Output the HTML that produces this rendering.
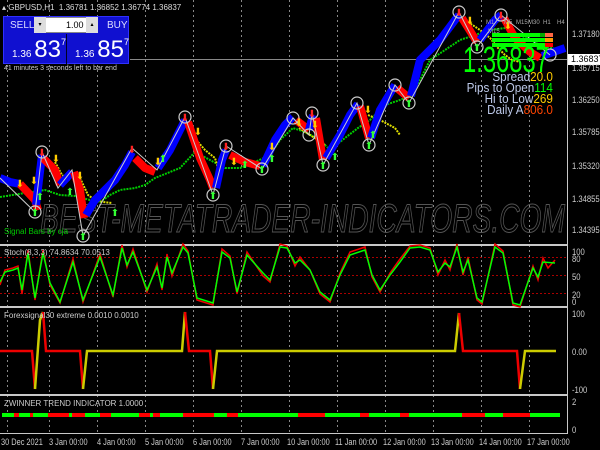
<!DOCTYPE html>
<html><head><meta charset="utf-8"><style>
*{margin:0;padding:0;box-sizing:border-box}
body{width:600px;height:450px;background:#000;overflow:hidden;position:relative;font-family:"Liberation Sans",sans-serif;color:#fff}
.t{position:absolute;white-space:nowrap}
.ax{position:absolute;left:572px;font-size:9px;color:#ccc;transform:scaleX(.85);transform-origin:left}
.d{position:absolute;top:437px;font-size:9px;color:#ccc;transform:scaleX(.82);transform-origin:left;white-space:nowrap}
</style></head><body>
<svg width="600" height="450" style="position:absolute;left:0;top:0">
<g stroke="#888" stroke-dasharray="2,3" stroke-width="1">
<line x1="7.5" y1="0" x2="7.5" y2="433"/><line x1="49.5" y1="0" x2="49.5" y2="433"/><line x1="97.5" y1="0" x2="97.5" y2="433"/><line x1="145.5" y1="0" x2="145.5" y2="433"/><line x1="193.5" y1="0" x2="193.5" y2="433"/><line x1="241.5" y1="0" x2="241.5" y2="433"/><line x1="289.5" y1="0" x2="289.5" y2="433"/><line x1="337.5" y1="0" x2="337.5" y2="433"/><line x1="385.5" y1="0" x2="385.5" y2="433"/><line x1="433.5" y1="0" x2="433.5" y2="433"/><line x1="481.5" y1="0" x2="481.5" y2="433"/><line x1="529.5" y1="0" x2="529.5" y2="433"/>
</g>
<g stroke="#c8c8c8" stroke-width="2" fill="none">
<line x1="0" y1="245" x2="568" y2="245"/><line x1="0" y1="307" x2="568" y2="307"/><line x1="0" y1="395" x2="568" y2="395"/>
</g>
<line x1="567.5" y1="0" x2="567.5" y2="433" stroke="#c8c8c8"/>
<line x1="0" y1="433.5" x2="568" y2="433.5" stroke="#c8c8c8"/>
<line x1="130" y1="59.5" x2="567" y2="59.5" stroke="#888"/>
<text x="40" y="232" font-family="Liberation Sans" font-style="italic" font-size="40" fill="none" stroke="#555" stroke-width="1" textLength="525" lengthAdjust="spacingAndGlyphs">BEST-METATRADER-INDICATORS.COM</text>
<polyline fill="none" stroke="#0c0" stroke-width="2" stroke-dasharray="2,1" points="0,197 25,193 45,190 60,195 75,196 90,200 100,202 110,195 120,190 135,188 145,185 155,178 165,174 180,168 195,152 210,160 225,168 240,168 255,162 270,155 280,140 293,128 305,132 320,140 330,150 345,138 358,128 370,120 385,105 400,100 412,95 420,80 430,60 445,50 460,40 475,35 490,30 505,28 520,35 540,45 560,50"/>
<g fill="none" stroke="#dd0" stroke-width="2" stroke-dasharray="2,1">
<polyline points="55,162 62,175 70,180"/>
<polyline points="80,178 88,195 95,200 103,202 112,203"/>
<polyline points="198,142 205,150 215,158 218,168"/>
<polyline points="299,128 310,135 318,140 325,145"/>
<polyline points="368,115 380,120 395,128 400,135"/>
<polyline points="468,22 480,30 490,38 498,48 505,55 512,60 520,62"/>
</g>
<g fill="none" stroke-width="8" stroke-linejoin="round">
<polyline stroke="#00f" points="0,178 10,182 20,184"/>
<polyline stroke="#f00" points="20,184 35,200 38,210"/>
<polyline stroke="#00f" points="36,205 42,155"/>
<polyline stroke="#f00" points="43,158 55,170 60,185"/>
<polyline stroke="#00f" points="60,185 72,172"/>
<polyline stroke="#f00" points="74,172 80,190 84,218"/>
<polyline stroke="#00f" points="86,215 95,200 105,190 115,180 125,165 132,152"/>
<polyline stroke="#f00" points="135,158 145,168 155,172"/>
<polyline stroke="#00f" points="158,168 170,150 180,130 185,120"/>
<polyline stroke="#f00" points="188,122 200,158 210,180 213,188"/>
<polyline stroke="#00f" points="216,188 222,160 226,150"/>
<polyline stroke="#f00" points="230,155 245,162 260,166"/>
<polyline stroke="#00f" points="263,166 275,140 285,125 293,117"/>
<polyline stroke="#f00" points="296,120 309,130"/>
<polyline stroke="#00f" points="309,130 313,115"/>
<polyline stroke="#f00" points="316,118 323,160"/>
<polyline stroke="#00f" points="326,158 340,135 350,115 358,104"/>
<polyline stroke="#f00" points="360,106 369,138"/>
<polyline stroke="#00f" points="371,138 380,110 395,85"/>
<polyline stroke="#f00" points="397,88 409,98"/>
<polyline stroke="#00f" points="411,96 420,60 440,40 455,20 459,15"/>
<polyline stroke="#f00" points="462,18 477,42"/>
<polyline stroke="#00f" points="480,40 495,20 501,15"/>
<polyline stroke="#f00" points="504,18 515,38 530,52 540,58"/>
<polyline stroke="#00f" points="542,56 565,48"/>
</g>
<polyline fill="none" stroke="#ccc" stroke-width="1" points="0,178 35,212 42,152 58,188 72,170 83,236 132,148 157,170 185,117 213,195 226,146 262,169 293,118 309,135 312,113 323,165 357,103 369,145 395,85 409,103 459,12 477,47 501,15 550,55"/>
<g fill="none" stroke="#ccc" stroke-width="1.2">
<circle cx="35" cy="212" r="6"/><circle cx="42" cy="152" r="6"/><circle cx="83" cy="236" r="6"/><circle cx="185" cy="117" r="6"/><circle cx="213" cy="195" r="6"/><circle cx="226" cy="146" r="6"/><circle cx="262" cy="169" r="6"/><circle cx="293" cy="118" r="6"/><circle cx="309" cy="135" r="6"/><circle cx="312" cy="113" r="6"/><circle cx="323" cy="165" r="6"/><circle cx="357" cy="103" r="6"/><circle cx="369" cy="145" r="6"/><circle cx="395" cy="85" r="6"/><circle cx="409" cy="103" r="6"/><circle cx="459" cy="12" r="6"/><circle cx="477" cy="47" r="6"/><circle cx="501" cy="15" r="6"/><circle cx="550" cy="55" r="6"/>
</g>
<g font-family="DejaVu Sans" font-size="10" text-anchor="middle">
<g fill="#f22"><text x="42" y="156">⬇</text><text x="185" y="121">⬇</text><text x="226" y="150">⬇</text><text x="312" y="117">⬇</text><text x="132" y="153">⬇</text><text x="459" y="16">⬇</text><text x="501" y="19">⬇</text></g>
<g fill="#3f3"><text x="35" y="216">⬆</text><text x="83" y="240">⬆</text><text x="213" y="199">⬆</text><text x="262" y="173">⬆</text><text x="323" y="169">⬆</text><text x="369" y="149">⬆</text><text x="409" y="107">⬆</text><text x="477" y="51">⬆</text><text x="40" y="200">⬆</text><text x="70" y="195">⬆</text><text x="115" y="216">⬆</text><text x="163" y="162">⬆</text><text x="245" y="168">⬆</text><text x="272" y="162">⬆</text><text x="335" y="160">⬆</text><text x="373" y="138">⬆</text></g>
<g fill="#fc0"><text x="20" y="187">⬇</text><text x="34" y="184">⬇</text><text x="56" y="162">⬇</text><text x="80" y="179">⬇</text><text x="198" y="135">⬇</text><text x="158" y="165">⬇</text><text x="234" y="165">⬇</text><text x="272" y="150">⬇</text><text x="299" y="126">⬇</text><text x="315" y="128">⬇</text><text x="368" y="113">⬇</text><text x="470" y="24">⬇</text><text x="508" y="29">⬇</text></g>
</g>
<text x="4" y="234" font-size="8" fill="#0c0" font-family="Liberation Sans">Signal Bars by cja</text>
<g stroke="#a00" stroke-dasharray="2,2"><line x1="0" y1="257.5" x2="567" y2="257.5"/><line x1="0" y1="275.5" x2="567" y2="275.5"/><line x1="0" y1="293.5" x2="567" y2="293.5"/></g>
<polyline fill="none" stroke="#e00" stroke-width="1.5" points="0,285 5,270 13,268 18,266 22,294 28,250 35,300 43,250 50,285 60,303 73,259 83,302 100,254 113,297 122,245 127,267 133,249 147,292 157,264 162,290 167,254 172,276 183,244 188,251 197,300 213,305 222,249 230,256 237,294 247,252 263,276 270,282 280,244 287,246 295,266 300,257 310,270 320,294 330,302 340,273 350,252 365,247 372,277 380,292 390,273 400,259 410,246 420,245 430,248 438,275 445,260 450,270 457,244 463,275 468,257 477,300 482,304 495,244 503,251 513,305 520,307 533,266 538,280 543,258 548,268 555,260"/>
<polyline fill="none" stroke="#0f0" stroke-width="1.5" points="0,282 5,272 13,270 18,268 22,290 28,253 35,298 43,253 50,283 60,302 73,262 83,300 100,257 113,295 122,248 127,265 133,252 147,290 157,267 162,288 167,257 172,273 183,247 188,253 197,298 213,303 222,252 230,258 237,292 247,255 263,273 270,280 280,247 287,248 295,263 300,260 310,270 320,292 330,300 340,275 350,255 365,250 372,275 380,290 390,275 400,262 410,248 420,247 430,250 438,272 445,263 450,267 457,247 463,272 468,260 477,298 482,302 495,247 503,253 513,303 520,305 533,268 538,277 543,262 555,263"/>
<text x="4" y="255" font-size="8" fill="#ccc">Stoch(8,3,3) 74.8634 70.0513</text>
<g fill="none" stroke-width="2.5">
<polyline stroke="#e00" points="0,351 32,351 35,389"/>
<polyline stroke="#cc0" points="35,389 40,320 43,312"/>
<polyline stroke="#e00" points="43,312 46,351 80,351 83,389"/>
<polyline stroke="#cc0" points="83,389 87,351 182,351 185,312"/>
<polyline stroke="#e00" points="185,312 189,351 210,351 213,389"/>
<polyline stroke="#cc0" points="213,389 217,351 455,351 459,313"/>
<polyline stroke="#e00" points="459,313 463,351 517,351 520,389"/>
<polyline stroke="#cc0" points="520,389 525,351 556,351"/>
</g>
<text x="4" y="318" font-size="8" fill="#ccc">Forexsignal30 extreme 0.0010 0.0010</text>
<rect x="492" y="33" width="48" height="4" fill="#0f0"/><rect x="540" y="33" width="5" height="4" fill="#0a0"/><rect x="545" y="33" width="8" height="4" fill="#f64"/>
<rect x="492" y="38" width="53" height="4" fill="#0f0"/><rect x="545" y="38" width="8" height="4" fill="#f90"/>
<rect x="492" y="43" width="53" height="4" fill="#0f0"/><rect x="545" y="43" width="8" height="4" fill="#f00"/>
<g font-size="6" fill="#aaa"><text x="486" y="24">M1</text><text x="488" y="33">M15</text><text x="504" y="24">M5</text><text x="516" y="24">M15</text><text x="528" y="24">M30</text><text x="543" y="24">H1</text><text x="557" y="24">H4</text></g>
</svg>
<div style="position:absolute;left:2px;top:413px;height:4px;width:560px;display:flex">
<div style="width:12px;background:#0f0"></div><div style="width:5px;background:#f00"></div><div style="width:11px;background:#0f0"></div><div style="width:3px;background:#f00"></div><div style="width:15px;background:#0f0"></div><div style="width:21px;background:#f00"></div><div style="width:3px;background:#0f0"></div><div style="width:13px;background:#f00"></div><div style="width:15px;background:#0f0"></div><div style="width:11px;background:#f00"></div><div style="width:28px;background:#0f0"></div><div style="width:11px;background:#f00"></div><div style="width:3px;background:#0f0"></div><div style="width:7px;background:#f00"></div><div style="width:23px;background:#0f0"></div><div style="width:31px;background:#f00"></div><div style="width:13px;background:#0f0"></div><div style="width:11px;background:#f00"></div><div style="width:60px;background:#0f0"></div><div style="width:27px;background:#f00"></div><div style="width:35px;background:#0f0"></div><div style="width:9px;background:#f00"></div><div style="width:31px;background:#0f0"></div><div style="width:9px;background:#f00"></div><div style="width:53px;background:#0f0"></div><div style="width:23px;background:#f00"></div><div style="width:18px;background:#0f0"></div><div style="width:27px;background:#f00"></div><div style="width:30px;background:#0f0"></div>
</div>
<div class="t" style="left:4px;top:399px;font-size:8px;color:#ccc">ZWINNER TREND INDICATOR 1.0000</div>
<div class="t" style="left:2px;top:3px;font-size:8px;color:#ddd">▴ GBPUSD,H1&nbsp; 1.36781 1.36852 1.36774 1.36837</div>
<div style="position:absolute;left:3px;top:16px;width:126px;height:48px;background:#1010d0;border:1px solid #3030ff"></div>
<div class="t" style="left:10px;top:20px;font-size:10px;color:#ddf">SELL</div>
<div class="t" style="left:107px;top:20px;font-size:10px;color:#ddf">BUY</div>
<div style="position:absolute;left:34px;top:17px;width:64px;height:16px;background:#fff;border:1px solid #888"></div>
<div style="position:absolute;left:34px;top:17px;width:12px;height:16px;background:#ddd;font-size:6px;color:#000;text-align:center;line-height:16px">▾</div>
<div style="position:absolute;left:86px;top:17px;width:12px;height:16px;background:#ddd;font-size:6px;color:#000;text-align:center;line-height:16px">▴</div>
<div class="t" style="left:66px;top:20px;font-size:9px;color:#000">1.00</div>
<div style="position:absolute;left:66px;top:34px;width:1px;height:30px;background:#002"></div>
<div class="t" style="left:12px;top:36px;font-size:24px;color:#fff"><span style="font-size:10px">1.36 </span>83<sup style="font-size:9px;vertical-align:12px">7</sup></div>
<div class="t" style="left:75px;top:36px;font-size:24px;color:#fff"><span style="font-size:10px">1.36 </span>85<sup style="font-size:9px;vertical-align:12px">7</sup></div>
<div class="t" style="left:4px;top:65px;font-size:7px;color:#ccc">41 minutes 3 seconds left to bar end</div>
<div class="t" style="left:463px;top:44px;font-size:36px;color:#0f0;transform:scaleX(.66);transform-origin:left;line-height:32px">1.36837</div>
<div class="t" style="right:47px;top:71px;font-size:13px;line-height:11px;text-align:right;transform:scaleX(.9);transform-origin:right">
<div><span style="color:#bcc8e8">Spread</span><span style="color:#fc0">20.0</span></div>
<div><span style="color:#bcc8e8">Pips to Open</span><span style="color:#0f0">114</span></div>
<div><span style="color:#bcc8e8">Hi to Low</span><span style="color:#fc0">269</span></div>
<div><span style="color:#bcc8e8">Daily A</span><span style="color:#f40">806.0</span></div>
</div>
<div class="ax" style="top:29px">1.37180</div>
<div style="position:absolute;left:568px;top:54px;width:32px;height:11px;background:#fff;color:#000;font-size:9px;line-height:11px;padding-left:3px">1.36837</div>
<div class="ax" style="top:63px">1.36715</div>
<div class="ax" style="top:95px">1.36250</div>
<div class="ax" style="top:127px">1.35785</div>
<div class="ax" style="top:161px">1.35320</div>
<div class="ax" style="top:194px">1.34855</div>
<div class="ax" style="top:225px">1.34395</div>
<div class="ax" style="top:247px">100</div><div class="ax" style="top:254px">80</div><div class="ax" style="top:272px">50</div><div class="ax" style="top:290px">20</div><div class="ax" style="top:297px">0</div>
<div class="ax" style="top:309px">100</div><div class="ax" style="top:347px">0.00</div><div class="ax" style="top:385px">-100</div>
<div class="ax" style="top:397px">2</div><div class="ax" style="top:425px">0</div>
<div class="d" style="left:1px">30 Dec 2021</div><div class="d" style="left:49px">3 Jan 00:00</div><div class="d" style="left:97px">4 Jan 00:00</div><div class="d" style="left:145px">5 Jan 00:00</div><div class="d" style="left:193px">6 Jan 00:00</div><div class="d" style="left:241px">7 Jan 00:00</div><div class="d" style="left:287px">10 Jan 00:00</div><div class="d" style="left:335px">11 Jan 00:00</div><div class="d" style="left:383px">12 Jan 00:00</div><div class="d" style="left:431px">13 Jan 00:00</div><div class="d" style="left:479px">14 Jan 00:00</div><div class="d" style="left:527px">17 Jan 00:00</div>
</body></html>
